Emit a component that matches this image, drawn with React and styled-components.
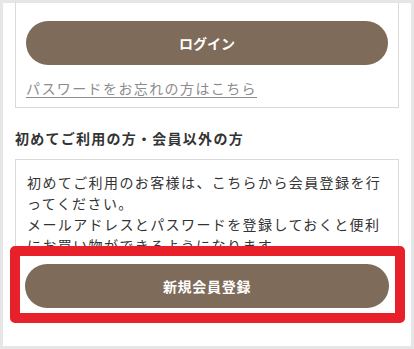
import React from "react";
import styled, { createGlobalStyle } from "styled-components";

const GlobalStyle = createGlobalStyle`
  body {
    margin: 0;
    background: #ffffff;
    font-family: "Noto Sans CJK JP", "Noto Sans", sans-serif;
    color: #333333;
  }
`;

const Frame = styled.div`
  box-sizing: border-box;
  width: 414px;
  height: 349px;
  border: 3px solid #e6e6e6;
  padding: 0 12px;
  overflow: hidden;
  background: #ffffff;
`;

const LoginCard = styled.section`
  border: 1px solid #d9d9d9;
  border-top: none;
  padding: 18px 10px 8px;
`;

const PillButton = styled.button`
  display: block;
  width: 100%;
  height: 44px;
  border: none;
  border-radius: 22px;
  background: #7e6b5a;
  color: #ffffff;
  font-family: inherit;
  font-size: 14px;
  font-weight: 700;
  letter-spacing: ${(p) => (p.$spaced ? "0.05em" : "0")};
  cursor: pointer;
`;

const ForgotLink = styled.a`
  display: inline-block;
  margin-top: 12px;
  font-size: 14px;
  line-height: 22px;
  letter-spacing: 0.1em;
  color: #8c8c8c;
  text-decoration: underline;
  text-underline-offset: 3px;
`;

const Heading = styled.h3`
  margin: 19px 0 10px;
  font-size: 14px;
  line-height: 22px;
  font-weight: 700;
  letter-spacing: 0.09em;
  color: #333333;
`;

const InfoBox = styled.div`
  box-sizing: border-box;
  height: 94px;
  overflow: hidden;
  border: 1px solid #d9d9d9;
  padding: 12px 10px 0 11px;
  font-size: 14px;
  line-height: 21px;
  letter-spacing: 0.1em;
  color: #333333;

  p {
    margin: 0;
  }
`;

const RegisterWrap = styled.div`
  position: relative;
  margin: 11px 10px 0;
`;

const Highlight = styled.span`
  position: absolute;
  top: -18px;
  left: -15px;
  right: -16px;
  bottom: -15px;
  border: 10px solid #e8202a;
  border-radius: 5px;
  pointer-events: none;
`;

export default function App() {
  return (
    <>
      <GlobalStyle />
      <Frame>
        <LoginCard>
          <PillButton type="button">ログイン</PillButton>
          <ForgotLink href="#forgot">パスワードをお忘れの方はこちら</ForgotLink>
        </LoginCard>
        <Heading>初めてご利用の方・会員以外の方</Heading>
        <InfoBox>
          <p>初めてご利用のお客様は、こちらから会員登録を行ってください。</p>
          <p>メールアドレスとパスワードを登録しておくと便利にお買い物ができるようになります。</p>
        </InfoBox>
        <RegisterWrap>
          <PillButton type="button" $spaced>新規会員登録</PillButton>
          <Highlight />
        </RegisterWrap>
      </Frame>
    </>
  );
}
